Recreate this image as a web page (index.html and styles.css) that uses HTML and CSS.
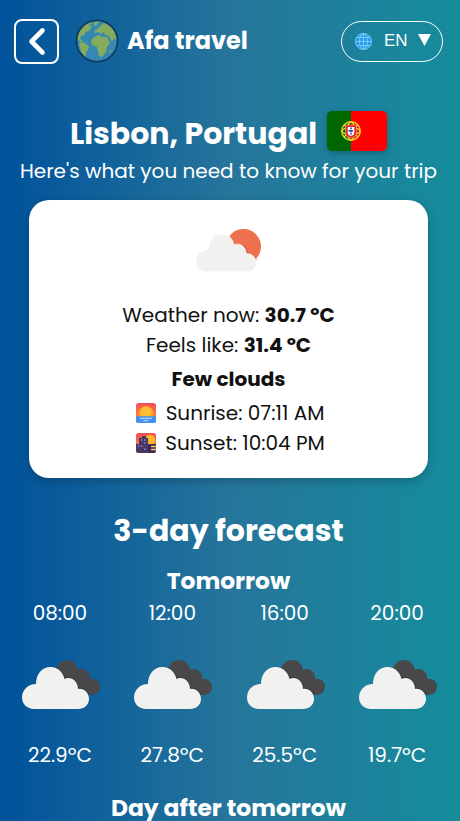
FILE: index.html
```html
<!DOCTYPE html>
<html lang="en">
<head>
<meta charset="utf-8">
<title>Afa travel</title>
<link rel="stylesheet" href="styles.css">
</head>
<body>
<svg width="0" height="0" class="defs">
  <defs>
    <linearGradient id="dusk" x2="0" y2="1"><stop stop-color="#f04d55"/><stop offset="1" stop-color="#ff9b38"/></linearGradient>
    <symbol id="cloud" viewBox="0 0 68 42">
      <path d="M12 42C5 42 0 37 0 30.500C0 23 6 17 14 17C14 7 20 0 28.500 0C36 0 41 5 42.500 12C49 9 56 14 56 22C62 21 67 26 67 32C67 38 62 42 56 42Z"/>
    </symbol>
    <symbol id="broken" viewBox="0 0 78 50">
      <path fill="#48484a" d="M33 11C35 4 39 0 45 0C51 0 55 4 56 10C62 7 69 12 68 19C74 18 78 22 78 27C78 32 74 35 69 35C58 35 49 28 44 21Z"/>
      <path fill="none" stroke="#303235" stroke-width="2" opacity=".65" d="M34 8.500C39 11 42 15 42 19C49 16 56 21 56 29C61 28 65 31 66.500 35"/>
      <use href="#cloud" y="7" width="68" height="42" fill="#f1f1f0"/>
    </symbol>
  </defs>
</svg>
<div class="page">
  <header class="header">
    <button class="back" aria-label="Back"><svg width="41" height="41" viewBox="0 0 41 41"><path d="M26.500 9.500L15.500 20.500L26.500 31.500" fill="none" stroke="#fff" stroke-width="4.600" stroke-linecap="round" stroke-linejoin="round"/></svg></button>
    <svg class="globe" viewBox="0 0 44 44">
      <circle cx="22" cy="22" r="20.600" fill="#3488b3"/>
      <g fill="#84ac5c">
        <path d="M3 16L6 10L11 5L16 3L17 5L14 6L17 8L15 11L11 13L9 16L6 17L5 20L8 22L6 23L3 21Z"/>
        <path d="M4 24L8 23L14 27L13 31L11 33L11 38L6 33Z"/>
        <path d="M16 22L19 18L24 16L28 18L32 18L35 24L32 28L31 33L27 38L24 37L22 28L17 26Z"/>
        <path d="M19 14L20 11L23 10L25 7L29 4L35 7L40 13L42 22L39 19L37 23L34 17L30 16L29 13L26 15L23 13Z"/>
        <path d="M19 3L24 2L22 6L19 7ZM34 33L36.500 29.500L35.500 34Z"/>
      </g>
      <circle cx="22" cy="22" r="20.600" fill="none" stroke="#133b5c" stroke-width="1.800"/>
    </svg>
    <strong class="brand">Afa travel</strong>
    <button class="lang">
      <svg width="17" height="17" viewBox="0 0 17 17"><circle cx="8.500" cy="8.500" r="8" fill="#2499e8"/><g fill="none" stroke="#74cdfa" stroke-width="1"><circle cx="8.500" cy="8.500" r="8"/><ellipse cx="8.500" cy="8.500" rx="4" ry="8"/><path d="M8.500 .5v16M.5 8.500h16M2 4.500h13M2 12.500h13"/></g></svg>
      <span>EN</span>
      <svg class="caret" width="13" height="12" viewBox="0 0 14 13"><path d="M0 0H14L7 13Z" fill="#fff"/></svg>
    </button>
  </header>
  <section class="place">
    <h1>Lisbon, Portugal</h1>
    <svg class="flag" viewBox="0 0 60 40">
      <path fill="#060" d="M0 0h24v40H0z"/><path fill="red" d="M24 0h36v40H24z"/>
      <g fill="none" stroke="#e8dc1d" stroke-width="1.300"><circle cx="24" cy="20" r="9.300"/><ellipse cx="24" cy="20" rx="9" ry="3.500"/><ellipse cx="24" cy="20" rx="4" ry="9"/><path d="M17 14L31 26M17 26L31 14"/></g>
      <path d="M18.500 14h11v7.500q0 5-5.500 5.500q-5.500-.5-5.500-5.500z" fill="#e9242b" stroke="#eecfc0" stroke-width=".5"/>
      <path d="M20.700 16h6.600v5.500q0 3-3.300 3.300q-3.300-.3-3.300-3.300z" fill="#fff"/>
      <path d="M24 16.500v7M21.500 19.800h5" stroke="#174b9a" stroke-width="1.600" stroke-dasharray="1.800 .8"/>
    </svg>
  </section>
  <p class="subtitle">Here's what you need to know for your trip</p>
  <main class="card">
    <svg class="few" viewBox="0 0 66 44">
      <circle cx="47.500" cy="17.500" r="17.500" fill="#ed704f"/>
      <path d="M33 9Q37 12 38 18Q46 14 50 20L51 26Q56 26 60 31" fill="none" stroke="#dc553a" stroke-width="2"/>
      <use href="#cloud" x="0" y="5" width="61" height="38" fill="#f1f1f0" stroke="#fff" stroke-width=".8"/>
    </svg>
    <p class="now">Weather now: <b>30.7 ºC</b></p>
    <p class="feels">Feels like: <b>31.4 ºC</b></p>
    <p class="sky"><b>Few clouds</b></p>
    <p class="sun sunrise"><svg viewBox="0 0 20 20"><rect width="20" height="20" rx="2.500" fill="url(#dusk)"/><path d="M10 2.500l1.500 1.200 2-.5.8 1.800 2 .7v2l1.200 1.600-1 2 .5 3H3l.5-3-1-2L3.700 7.700v-2l2-.7.8-1.800 2 .5z" fill="#ffae24"/><circle cx="10" cy="9" r="5" fill="#ffbe33"/><path d="M0 13.300h20v4.200a2.500 2.500 0 0 1-2.500 2.500h-15A2.500 2.500 0 0 1 0 17.500z" fill="#4290f5"/><path d="M4 15.300h12M7.500 17.700h5" stroke="#c7e4ff"/></svg><span>Sunrise: 07:11 AM</span></p>
    <p class="sun sunset"><svg viewBox="0 0 20 20"><rect width="20" height="20" rx="2.500" fill="url(#dusk)"/><circle cx="14" cy="7" r="5.300" fill="#ffb52a"/><path d="M0 11h3V5h3V3h4v2h2v6h3v9H2.500A2.500 2.500 0 0 1 0 17.500z" fill="#483762"/><path d="M12 12h3v-1h5v6.500a2.500 2.500 0 0 1-2.500 2.500H12z" fill="#3b2a58"/><path d="M5 7h1.500M8 7h1.500M8 10h1.500M2 13h1.500M5 13h1.500M8 16h1.500" stroke="#9a80bc" stroke-width="1.500"/><path d="M15 13.500h5M15 16.500h5" stroke="#f5c768" stroke-width="1.500"/></svg><span>Sunset: 10:04 PM</span></p>
  </main>
  <h2>3-day forecast</h2>
  <h3 class="tomorrow">Tomorrow</h3>
  <section class="hours">
    <div class="hour"><span class="time">08:00</span><svg viewBox="0 0 78 50"><use href="#broken"/></svg><span class="temp">22.9ºC</span></div>
    <div class="hour"><span class="time">12:00</span><svg viewBox="0 0 78 50"><use href="#broken"/></svg><span class="temp">27.8ºC</span></div>
    <div class="hour"><span class="time">16:00</span><svg viewBox="0 0 78 50"><use href="#broken"/></svg><span class="temp">25.5ºC</span></div>
    <div class="hour"><span class="time">20:00</span><svg viewBox="0 0 78 50"><use href="#broken"/></svg><span class="temp">19.7ºC</span></div>
  </section>
  <h3 class="after">Day after tomorrow</h3>
</div>
</body>
</html>
```
FILE: styles.css
```css
* { box-sizing: border-box; }
html, body { margin: 0; height: 821px; overflow: hidden; }
body {
  font: 20px/30px Poppins, Inter, sans-serif;
  color: #fff;
  background: linear-gradient(90deg, #00529b, #26759b 50%, #158c9c);
}
.defs { position: absolute; }
.page { width: 457px; text-align: center; }
h1, h2, h3, p { margin: 0; white-space: nowrap; }
h1, h2, h3, b { font-weight: 700; }
svg { display: block; flex: none; }
.header { display: flex; align-items: center; height: 82px; padding: 0 14px; }
.back { width: 45px; height: 45px; padding: 0; border: 2px solid #fff; border-radius: 8px; background: none; }
.globe { width: 44px; height: 44px; margin-left: 16px; }
.brand { margin-left: 8px; font-size: 24px; white-space: nowrap; }
.lang {
  display: flex; align-items: center;
  width: 102px; height: 41px; margin-left: auto; padding: 0 11px 0 13px;
  border: 1px solid #fff; border-radius: 21px; background: none; color: #fff;
  font: 17px "Liberation Sans", sans-serif;
}
.lang span { margin: 0 10px 0 12px; }
.lang .caret { margin-bottom: 2px; }
.place { display: flex; justify-content: center; align-items: center; gap: 10px; height: 40px; margin-top: 29px; }
h1 { font-size: 30px; line-height: 46px; padding-top: 6px; }
.flag { width: 60px; height: 40px; border-radius: 5px; box-shadow: 0 2px 6px rgba(0,0,0,.25); }
.subtitle { margin-top: 5px; }
.card {
  width: 399px; height: 278px; margin: 14px auto 0; padding-top: 29px;
  border-radius: 20px; background: #fff; color: #111; box-shadow: 0 3px 10px rgba(0,0,0,.22);
}
.few { width: 66px; height: 44px; margin: 0 auto 27px; }
.sky { margin: 4px 0; }
.sun { display: flex; align-items: center; justify-content: center; gap: 10px; padding-left: 3px; }
.sunset { gap: 9px; padding-left: 4px; }
.sun svg { width: 20px; height: 20px; }
h2 { margin-top: 29px; font-size: 30px; line-height: 48px; }
h3 { font-size: 23.400px; line-height: 36px; }
.tomorrow { margin-top: 8px; }
.hours { display: grid; grid-template-columns: repeat(4, 112.400px); justify-content: center; margin-top: -1px; }
.hour { display: flex; flex-direction: column; align-items: center; }
.hour svg { width: 78px; height: 50px; margin: 32px -2px 30px 0; }
.after { margin-top: 20px; }
```
